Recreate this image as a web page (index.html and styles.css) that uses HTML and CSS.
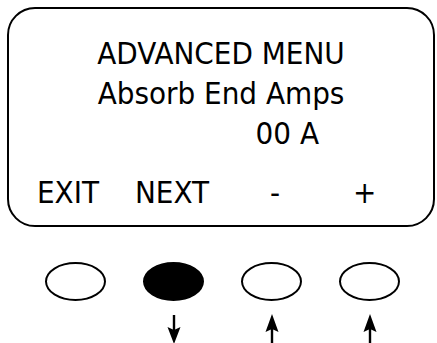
FILE: index.html
```html
<!DOCTYPE html>
<html>
<head>
<meta charset="utf-8">
<link rel="stylesheet" href="styles.css">
</head>
<body>
<div class="screen">
  <div class="line center">ADVANCED MENU</div>
  <div class="line center">Absorb End Amps</div>
  <div class="line value">00 A</div>
  <div class="softkeys">
    <span>EXIT</span>
    <span>NEXT</span>
    <span>-</span>
    <span>+</span>
  </div>
</div>
<div class="buttons">
  <div class="btn"></div>
  <div class="btn pressed"></div>
  <div class="btn"></div>
  <div class="btn"></div>
</div>
<div class="arrows">
  <div class="cell"></div>
  <div class="cell">
    <svg width="14" height="30" viewBox="0 0 14 30"><line x1="7" y1="1" x2="7" y2="18" stroke="#000" stroke-width="2.4"/><path d="M0.5 13 L7 30 L13.5 13 L7 16 Z" fill="#000"/></svg>
  </div>
  <div class="cell">
    <svg width="14" height="30" viewBox="0 0 14 30"><line x1="7" y1="12" x2="7" y2="30" stroke="#000" stroke-width="2.4"/><path d="M0.5 18 L7 0 L13.5 18 L7 15 Z" fill="#000"/></svg>
  </div>
  <div class="cell">
    <svg width="14" height="30" viewBox="0 0 14 30"><line x1="7" y1="12" x2="7" y2="30" stroke="#000" stroke-width="2.4"/><path d="M0.5 18 L7 0 L13.5 18 L7 15 Z" fill="#000"/></svg>
  </div>
</div>
</body>
</html>
```

FILE: styles.css
```css
html, body {
  margin: 0;
  padding: 0;
  background: #fff;
  overflow: hidden;
}
body {
  width: 437px;
  height: 343px;
  font-family: "DejaVu Sans Condensed", "DejaVu Sans", sans-serif;
  color: #000;
}
.screen {
  box-sizing: border-box;
  margin: 7px 0 0 7px;
  width: 428px;
  height: 220px;
  border: 2px solid #000;
  border-radius: 28px;
  padding-top: 24px;
  display: flex;
  flex-direction: column;
}
.line {
  font-size: 31px;
  line-height: 40px;
  white-space: nowrap;
}
.center {
  text-align: center;
}
.value {
  text-align: right;
  padding-right: 114px;
}
.softkeys {
  margin-top: 19px;
  font-size: 31px;
  line-height: 40px;
  display: grid;
  grid-template-columns: 98px 135px 83px auto;
  padding-left: 28px;
  white-space: nowrap;
}
.buttons {
  display: flex;
  gap: 37px;
  padding-left: 45px;
  margin-top: 35px;
}
.btn {
  box-sizing: border-box;
  width: 61px;
  height: 39px;
  border: 2px solid #000;
  border-radius: 50%;
}
.btn.pressed {
  background: #000;
}
.arrows {
  display: flex;
  gap: 37px;
  padding-left: 45px;
  margin-top: 13px;
}
.cell {
  width: 61px;
  height: 30px;
  display: flex;
  justify-content: center;
}
.cell svg {
  display: block;
}
```
